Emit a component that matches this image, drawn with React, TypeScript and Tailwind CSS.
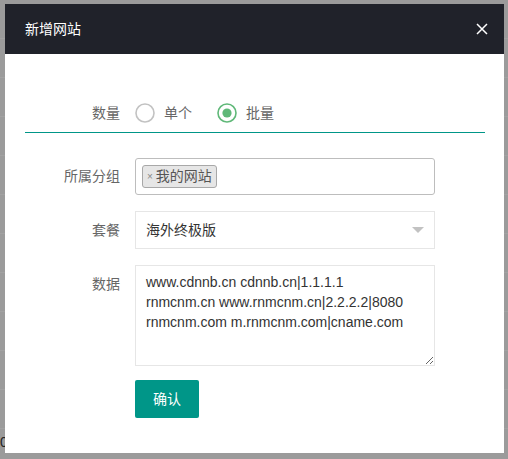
import React from "react";

const font = { fontFamily: '"Liberation Sans", Arial, "Noto Sans CJK SC", sans-serif' };

function Radio({ checked }: { checked?: boolean }) {
  return (
    <svg width="20" height="20" viewBox="0 0 20 20" className="shrink-0">
      <circle cx="10" cy="10" r="9" fill="none" stroke={checked ? "#5fb878" : "#c2c2c2"} strokeWidth="1.6" />
      {checked && <circle cx="10" cy="10" r="4.6" fill="#5fb878" />}
    </svg>
  );
}

function Row({ label, children, top }: { label: string; children: React.ReactNode; top?: boolean }) {
  return (
    <div className={`flex ${top ? "items-start" : "items-center"}`}>
      <div className={`w-[110px] shrink-0 pr-[15px] text-right text-[14px] text-[#666] ${top ? "pt-[9px]" : ""}`}>{label}</div>
      {children}
    </div>
  );
}

export default function App() {
  return (
    <div className="relative h-[459px] w-[508px] overflow-hidden bg-[#9b9b9b]" style={font}>
      {/* page behind the overlay */}
      <div className="flex flex-col">
        {Array.from({ length: 12 }).map((_, i) => (
          <div key={i} className="h-[39px] border-b border-[#a2a2a2]" />
        ))}
      </div>
      <div className="absolute left-0 top-[432px] text-[14px] text-[#222]">0</div>

      {/* dialog */}
      <div className="absolute left-[5px] top-[4px] flex h-[449px] w-[499px] flex-col bg-white">
        <div className="flex h-[50px] items-center justify-between bg-[#20222a] pl-[20px] pr-[16px]">
          <span className="text-[14px] text-white">新增网站</span>
          <svg width="12" height="12" viewBox="0 0 12 12">
            <path d="M1 1 L11 11 M11 1 L1 11" stroke="#fff" strokeWidth="1.5" />
          </svg>
        </div>

        <div className="flex flex-col px-[20px] pt-[44px]">
          <div className="flex h-[30px] items-center">
            <div className="w-[110px] shrink-0 pr-[15px] text-right text-[14px] text-[#666]">数量</div>
            <div className="flex items-center gap-[9px]">
              <Radio />
              <span className="text-[14px] text-[#666]">单个</span>
            </div>
            <div className="ml-[25px] flex items-center gap-[9px]">
              <Radio checked />
              <span className="text-[14px] text-[#666]">批量</span>
            </div>
          </div>
          <div className="mt-[4px] h-px w-[460px] bg-[#009688]" />

          <div className="mt-[25px] flex flex-col gap-[16px]">
            <Row label="所属分组">
              <div className="flex h-[37px] w-[300px] items-center rounded-[3px] border border-[#bdbdbd] px-[6px]">
                <span className="flex h-[23px] items-center rounded-[3px] border border-[#a8a8a8] bg-[#e6e6e6] px-[4px] text-[14px] text-[#555]">
                  <span className="mr-[3px] text-[10px] text-[#888]">×</span>我的网站
                </span>
              </div>
            </Row>
            <Row label="套餐">
              <div className="flex h-[38px] w-[300px] items-center justify-between border border-[#e6e6e6] pl-[10px] pr-[10px]">
                <span className="text-[14px] text-[#333]">海外终极版</span>
                <svg width="12" height="6" viewBox="0 0 12 6">
                  <path d="M0 0 L12 0 L6 6 Z" fill="#c2c2c2" />
                </svg>
              </div>
            </Row>
            <Row label="数据" top>
              <textarea
                readOnly
                className="h-[101px] w-[300px] resize-y border border-[#e6e6e6] px-[10px] py-[6px] font-['Liberation_Sans',Arial,sans-serif] text-[14px] leading-[20px] text-[#333] outline-none"
                defaultValue={"www.cdnnb.cn cdnnb.cn|1.1.1.1\nrnmcnm.cn www.rnmcnm.cn|2.2.2.2|8080\nrnmcnm.com m.rnmcnm.com|cname.com"}
              />
            </Row>
          </div>

          <div className="mt-[14px] pl-[110px]">
            <button className="h-[38px] w-[64px] rounded-[2px] bg-[#009688] text-[14px] text-white">确认</button>
          </div>
        </div>
      </div>
    </div>
  );
}
